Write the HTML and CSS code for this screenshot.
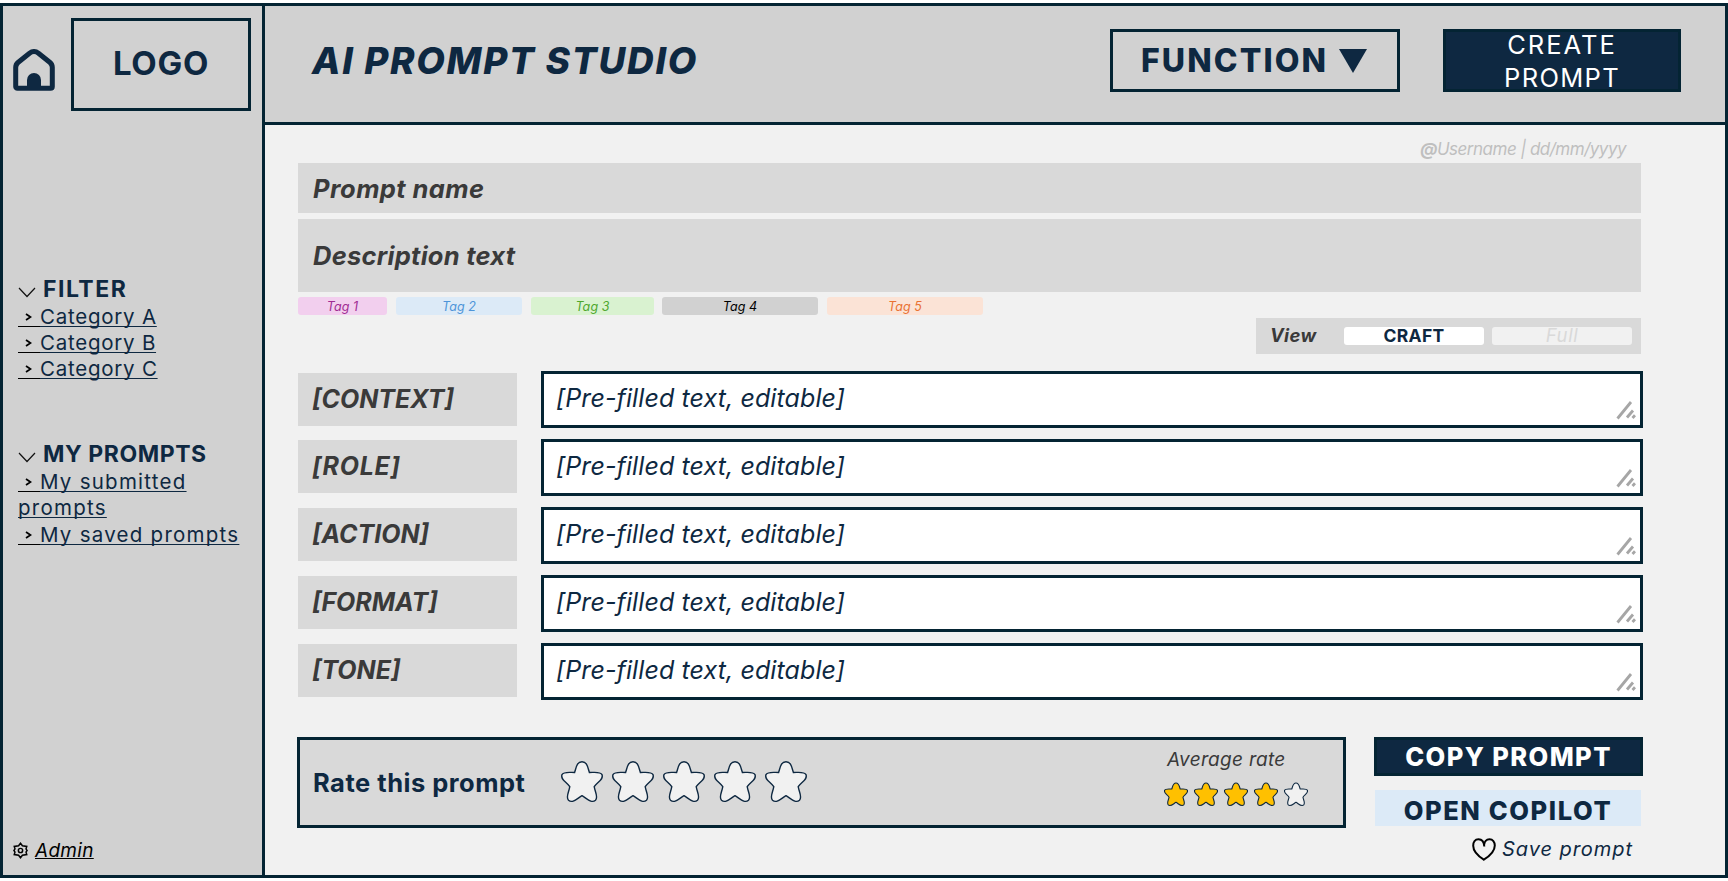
FILE: index.html
```html
<!DOCTYPE html>
<html lang="en">
<head>
<meta charset="utf-8">
<title>AI Prompt Studio</title>
<link rel="stylesheet" href="styles.css">
</head>
<body>
<svg class="defs" aria-hidden="true">
  <symbol id="star" viewBox="0 0 42 42"><path d="M13.6 11.5C15.3 6.5 15.8.8 21 .8S26.7 6.500 28.400 11.500C33 11.500 39.200 10.300 41 13.600C42.800 18.800 36.200 20.800 33.200 25.700C34 31 37.600 36 34.500 39.200C30.500 42.800 26 37.500 21 34.700C16 37.500 11.500 42.800 7.500 39.200C4.400 36 8 31 8.800 25.700C5.800 20.800 -.8 18.800 1 13.600C2.800 10.300 9 11.500 13.600 11.500Z"/></symbol>
  <symbol id="grip" viewBox="0 0 20 20"><path d="M1.500 18.500 15 2M11 17.500 17 10.500M16.500 18 19 15.300"/></symbol>
  <symbol id="down" viewBox="0 0 18 11"><path d="M1 1 9 9.500 17 1"/></symbol>
  <symbol id="next" viewBox="0 0 7 8"><path d="M1 1 5.500 4 1 7"/></symbol>
</svg>
<div class="app">
  <aside class="sidebar">
    <div class="brand">
      <svg class="home" viewBox="0 0 42 42"><path class="home-wall" d="M2.700 37.500V18.500Q2.700 15.500 5 13.500L16.500 4.200Q21 .9 25.500 4.200L37 13.500Q39.300 15.500 39.300 18.500V37.500Q39.300 39.300 37.500 39.300H4.500Q2.700 39.300 2.700 37.500Z"/><path class="home-door" d="M14 40V31a7 7 0 0 1 14 0V40Z"/></svg>
      <div class="logo"><span>LOGO</span></div>
    </div>
    <nav class="menu">
      <section>
        <h2><svg class="down"><use href="#down"/></svg><span class="t-filter">FILTER</span></h2>
        <ul>
          <li><a><i class="next"><svg><use href="#next"/></svg></i>Category A</a></li>
          <li><a><i class="next"><svg><use href="#next"/></svg></i>Category B</a></li>
          <li><a><i class="next"><svg><use href="#next"/></svg></i>Category C</a></li>
        </ul>
      </section>
      <section class="mine">
        <h2><svg class="down"><use href="#down"/></svg><span class="t-mine">MY PROMPTS</span></h2>
        <ul>
          <li><a><i class="next"><svg><use href="#next"/></svg></i>My submitted prompts</a></li>
          <li><a><i class="next"><svg><use href="#next"/></svg></i>My saved prompts</a></li>
        </ul>
      </section>
    </nav>
    <div class="admin">
      <svg class="gear" viewBox="0 0 16 16"><path d="M8 1.200 9.800 3.500 13.900 4.200 13.200 6.500 14.200 8 13.200 9.500 13.900 11.800 9.800 12.500 8 14.800 6.200 12.500 2.100 11.800 2.800 9.500 1.800 8 2.800 6.500 2.100 4.200 6.200 3.500Z"/><circle cx="8" cy="8" r="2"/></svg>
      <a>Admin</a>
    </div>
  </aside>
  <div class="body">
    <header class="topbar">
      <h1>AI PROMPT STUDIO</h1>
      <div class="function"><span>FUNCTION</span><svg viewBox="0 0 28 24"><path d="M0 0H28L14 24Z"/></svg></div>
      <div class="create"><span class="t-create">CREATE</span><span class="t-prompt">PROMPT</span></div>
    </header>
    <main class="main">
      <p class="meta"><b>@</b>Username | dd/mm/yyyy</p>
      <div class="field name"><span>Prompt name</span></div>
      <div class="field desc"><span>Description text</span></div>
      <div class="tags">
        <span class="tag pink">Tag 1</span><span class="tag blue">Tag 2</span><span class="tag green">Tag 3</span><span class="tag gray">Tag 4</span><span class="tag orange">Tag 5</span>
      </div>
      <div class="view"><b>View</b><span class="pill craft">CRAFT</span><span class="pill full">Full</span></div>
      <div class="rows">
        <div class="row"><span class="label">[CONTEXT]</span><div class="input"><span>[Pre-filled text, editable]</span><svg class="grip"><use href="#grip"/></svg></div></div>
        <div class="row"><span class="label t-role">[ROLE]</span><div class="input"><span>[Pre-filled text, editable]</span><svg class="grip"><use href="#grip"/></svg></div></div>
        <div class="row"><span class="label">[ACTION]</span><div class="input"><span>[Pre-filled text, editable]</span><svg class="grip"><use href="#grip"/></svg></div></div>
        <div class="row"><span class="label">[FORMAT]</span><div class="input"><span>[Pre-filled text, editable]</span><svg class="grip"><use href="#grip"/></svg></div></div>
        <div class="row"><span class="label">[TONE]</span><div class="input"><span>[Pre-filled text, editable]</span><svg class="grip"><use href="#grip"/></svg></div></div>
      </div>
      <div class="bottom">
        <div class="rate">
          <span class="rate-title">Rate this prompt</span>
          <div class="stars"><svg><use href="#star"/></svg><svg><use href="#star"/></svg><svg><use href="#star"/></svg><svg><use href="#star"/></svg><svg><use href="#star"/></svg></div>
          <div class="average">
            <span>Average rate</span>
            <div class="small-stars"><svg class="on"><use href="#star"/></svg><svg class="on"><use href="#star"/></svg><svg class="on"><use href="#star"/></svg><svg class="on"><use href="#star"/></svg><svg><use href="#star"/></svg></div>
          </div>
        </div>
        <div class="actions">
          <div class="copy"><span>COPY PROMPT</span></div>
          <div class="open"><span>OPEN COPILOT</span></div>
          <div class="save"><svg viewBox="0 0 24 23"><path d="M12.300 8.500C12 4.500 10.500 1.300 6.500 1.300C3 1.300 1.200 4.200 1.200 7.800C1.200 13.500 6 18 11.800 21.700C18.500 17.500 22.800 12.500 22.800 7.500C22.800 4 20.800 1.300 17.500 1.300C14.200 1.300 12.300 3.800 12.300 6.500"/></svg><span>Save prompt</span></div>
        </div>
      </div>
    </main>
  </div>
</div>
</body>
</html>
```

FILE: styles.css
```css
* { box-sizing: border-box; margin: 0; padding: 0; }
body { background: #fff; font-family: Inter, "Liberation Sans", sans-serif; color: #0e2841; padding-top: 3px; overflow: hidden; }
svg { display: block; flex: none; }
span, h1, p, b, a { white-space: nowrap; }
.defs { display: none; }
.app { width: 1728px; height: 875px; border: 3px solid #042433; display: flex; background: #f1f1f1; }

.sidebar { width: 262px; flex: none; background: #d1d1d1; border-right: 3px solid #042433; display: flex; flex-direction: column; }
.brand { display: flex; padding: 12px 0 0 10px; }
.home { width: 42px; height: 42px; margin-top: 31px; }
.home-wall { fill: none; stroke: #0e2841; stroke-width: 5; }
.home-door { fill: #0e2841; }
.logo { width: 180px; height: 93px; margin-left: 16px; border: 3px solid #042433; display: flex; align-items: center; justify-content: center; font-size: 33px; font-weight: 700; letter-spacing: .7px; line-height: 40px; padding-bottom: 3px; }
.menu { padding: 164px 0 0 15px; display: flex; flex-direction: column; gap: 57.500px; }
.menu h2 { height: 28.500px; line-height: 28px; font-size: 23px; font-weight: 700; display: flex; }
.t-filter { letter-spacing: 1.500px; }
.t-mine { letter-spacing: .55px; }
.down { width: 18px; height: 11px; margin: 12px 7px 0 0; fill: none; stroke: #111; stroke-width: 1.200; }
.menu ul { list-style: none; width: 228px; font-size: 20.500px; line-height: 26.400px; }
.menu a { white-space: normal; text-decoration: underline; text-decoration-thickness: 1px; text-underline-offset: 2px; text-decoration-skip-ink: none; letter-spacing: .75px; }
.menu .mine a { letter-spacing: 1.250px; }
.next { display: inline-block; width: 22px; height: 18px; vertical-align: -3px; border-bottom: 1px solid #000; padding: 4px 0 0 7px; }
.next svg { width: 7px; height: 8px; fill: none; stroke: #000; stroke-width: 1.800; }
.admin { margin-top: auto; padding: 0 0 10px 9px; display: flex; align-items: center; font-size: 19px; font-style: italic; letter-spacing: .3px; line-height: 28px; color: #000; }
.gear { width: 17px; height: 17px; margin: 0 6px 2px 0; fill: none; stroke: #000; stroke-width: 1.400; }
.admin a { text-decoration: underline; text-decoration-thickness: 1px; text-underline-offset: 1px; }

.body { flex: 1; display: flex; flex-direction: column; }
.topbar { height: 119px; flex: none; background: #d1d1d1; border-bottom: 3px solid #042433; display: flex; padding: 23px 44px 0 47px; }
h1 { font-size: 37px; line-height: 64px; font-weight: 800; font-style: italic; letter-spacing: 1.700px; height: 63px; }
.function { width: 290px; height: 63px; margin-left: auto; border: 3px solid #042433; display: flex; align-items: center; padding-left: 28px; font-size: 32px; font-weight: 800; letter-spacing: 2.100px; }
.function svg { width: 28px; height: 24px; margin-left: 11px; fill: #0e2841; }
.create { width: 238px; height: 63px; margin-left: 43px; background: #0e2841; border: 3px solid #042433; color: #fff; font-size: 25.500px; line-height: 33px; display: flex; flex-direction: column; align-items: center; justify-content: center; }
.t-create { letter-spacing: 2px; }
.t-prompt { letter-spacing: 1.300px; }

.main { flex: 1; padding: 0 0 0 33px; display: flex; flex-direction: column; }
.meta { width: 1343px; height: 38px; padding: 14px 15px 0 0; line-height: 20px; text-align: right; font-size: 17px; font-style: italic; letter-spacing: -.5px; color: #bfbfbf; }
.field { width: 1343px; background: #d9d9d9; color: #3a3a3a; font-size: 25.500px; font-weight: 700; font-style: italic; letter-spacing: .4px; display: flex; align-items: center; padding-left: 15px; }
.name { height: 50px; }
.desc { height: 73px; margin-top: 6px; letter-spacing: .25px; }
.tags { display: flex; gap: 9px; margin-top: 5px; font-size: 12.500px; font-style: italic; letter-spacing: .1px; line-height: 19px; text-align: center; }
.tag { height: 18px; border-radius: 3px; }
.pink { width: 89px; background: #f2cfee; color: #a02b93; }
.blue { width: 126px; background: #dceaf7; color: #4e95d9; }
.green { width: 123px; background: #d9f2d0; color: #4ea72e; }
.gray { width: 156px; background: #d1d1d1; color: #000; margin-left: -1px; }
.orange { width: 156px; background: #fbe3d6; color: #e97132; }
.view { width: 385px; height: 36px; margin: 3px 0 0 958px; background: #d9d9d9; display: flex; align-items: center; padding-left: 14px; color: #3a3a3a; font-size: 18.500px; }
.view b { width: 74px; font-style: italic; font-weight: 700; letter-spacing: .3px; padding-bottom: 2px; }
.pill { width: 140px; height: 18px; line-height: 18px; border-radius: 3px; text-align: center; }
.craft { background: #fff; color: #0e2841; font-size: 17.500px; font-weight: 700; letter-spacing: .3px; line-height: 17px; }
.full { background: #f1f1f1; color: #d9d9d9; margin-left: 8px; font-style: italic; letter-spacing: .6px; line-height: 17px; }
.rows { margin-top: 18px; display: flex; flex-direction: column; gap: 11.800px; }
.row { display: flex; align-items: flex-start; height: 56px; }
.label { width: 219px; height: 53px; line-height: 53px; margin-top: .5px; padding-left: 14px; background: #d9d9d9; color: #3a3a3a; font-size: 25px; font-weight: 700; font-style: italic; }
.t-role { letter-spacing: .7px; }
.input { width: 1102px; height: 57px; margin: -.600px 0 0 24px; padding: 0 4px 3px 12px; border: 3px solid #042433; background: #fff; display: flex; align-items: center; justify-content: space-between; font-size: 25px; font-style: italic; letter-spacing: .1px; }
.grip { width: 20px; height: 20px; margin-top: 24px; fill: none; stroke: #a6a6a6; stroke-width: 2.800; }
.bottom { display: flex; margin: 38px 0 0 -1px; }
.rate { width: 1049px; height: 91px; border: 3px solid #042433; background: #d9d9d9; display: flex; align-items: center; padding-left: 13px; }
.rate-title { width: 248px; font-size: 25.500px; font-weight: 700; letter-spacing: .5px; padding-bottom: 1px; }
.stars { display: flex; gap: 9px; padding-bottom: 1px; }
.stars svg { width: 42px; height: 42px; }
.stars svg, .small-stars svg { fill: #f1f1f1; stroke: #0e2841; stroke-width: 1.400; overflow: visible; }
.average { margin-left: auto; width: 179px; height: 85px; padding-top: 7px; }
.average span { display: block; padding-left: 3px; font-size: 19px; line-height: 25px; font-style: italic; letter-spacing: .3px; color: #3a3a3a; }
.small-stars { display: flex; gap: 6px; margin-top: 9.500px; }
.small-stars svg { width: 24px; height: 25px; stroke-width: 1.900; }
.small-stars .on { fill: #ffc000; }
.actions { margin-left: 28px; width: 269px; }
.copy { height: 39px; background: #0e2841; border: 3px solid #042433; color: #fff; letter-spacing: 1.400px; }
.open { height: 36px; margin: 14px 2px 0 1px; background: #dceaf7; padding-top: 4px; letter-spacing: 1.600px; }
.copy, .open { display: flex; align-items: center; justify-content: center; font-size: 25.500px; font-weight: 800; }
.save { display: flex; justify-content: flex-end; align-items: center; height: 28px; margin-top: 9px; padding-right: 10px; font-size: 20px; font-style: italic; letter-spacing: .950px; }
.save svg { width: 24px; height: 23px; margin-right: 6px; fill: none; stroke: #000; stroke-width: 2; }
```
